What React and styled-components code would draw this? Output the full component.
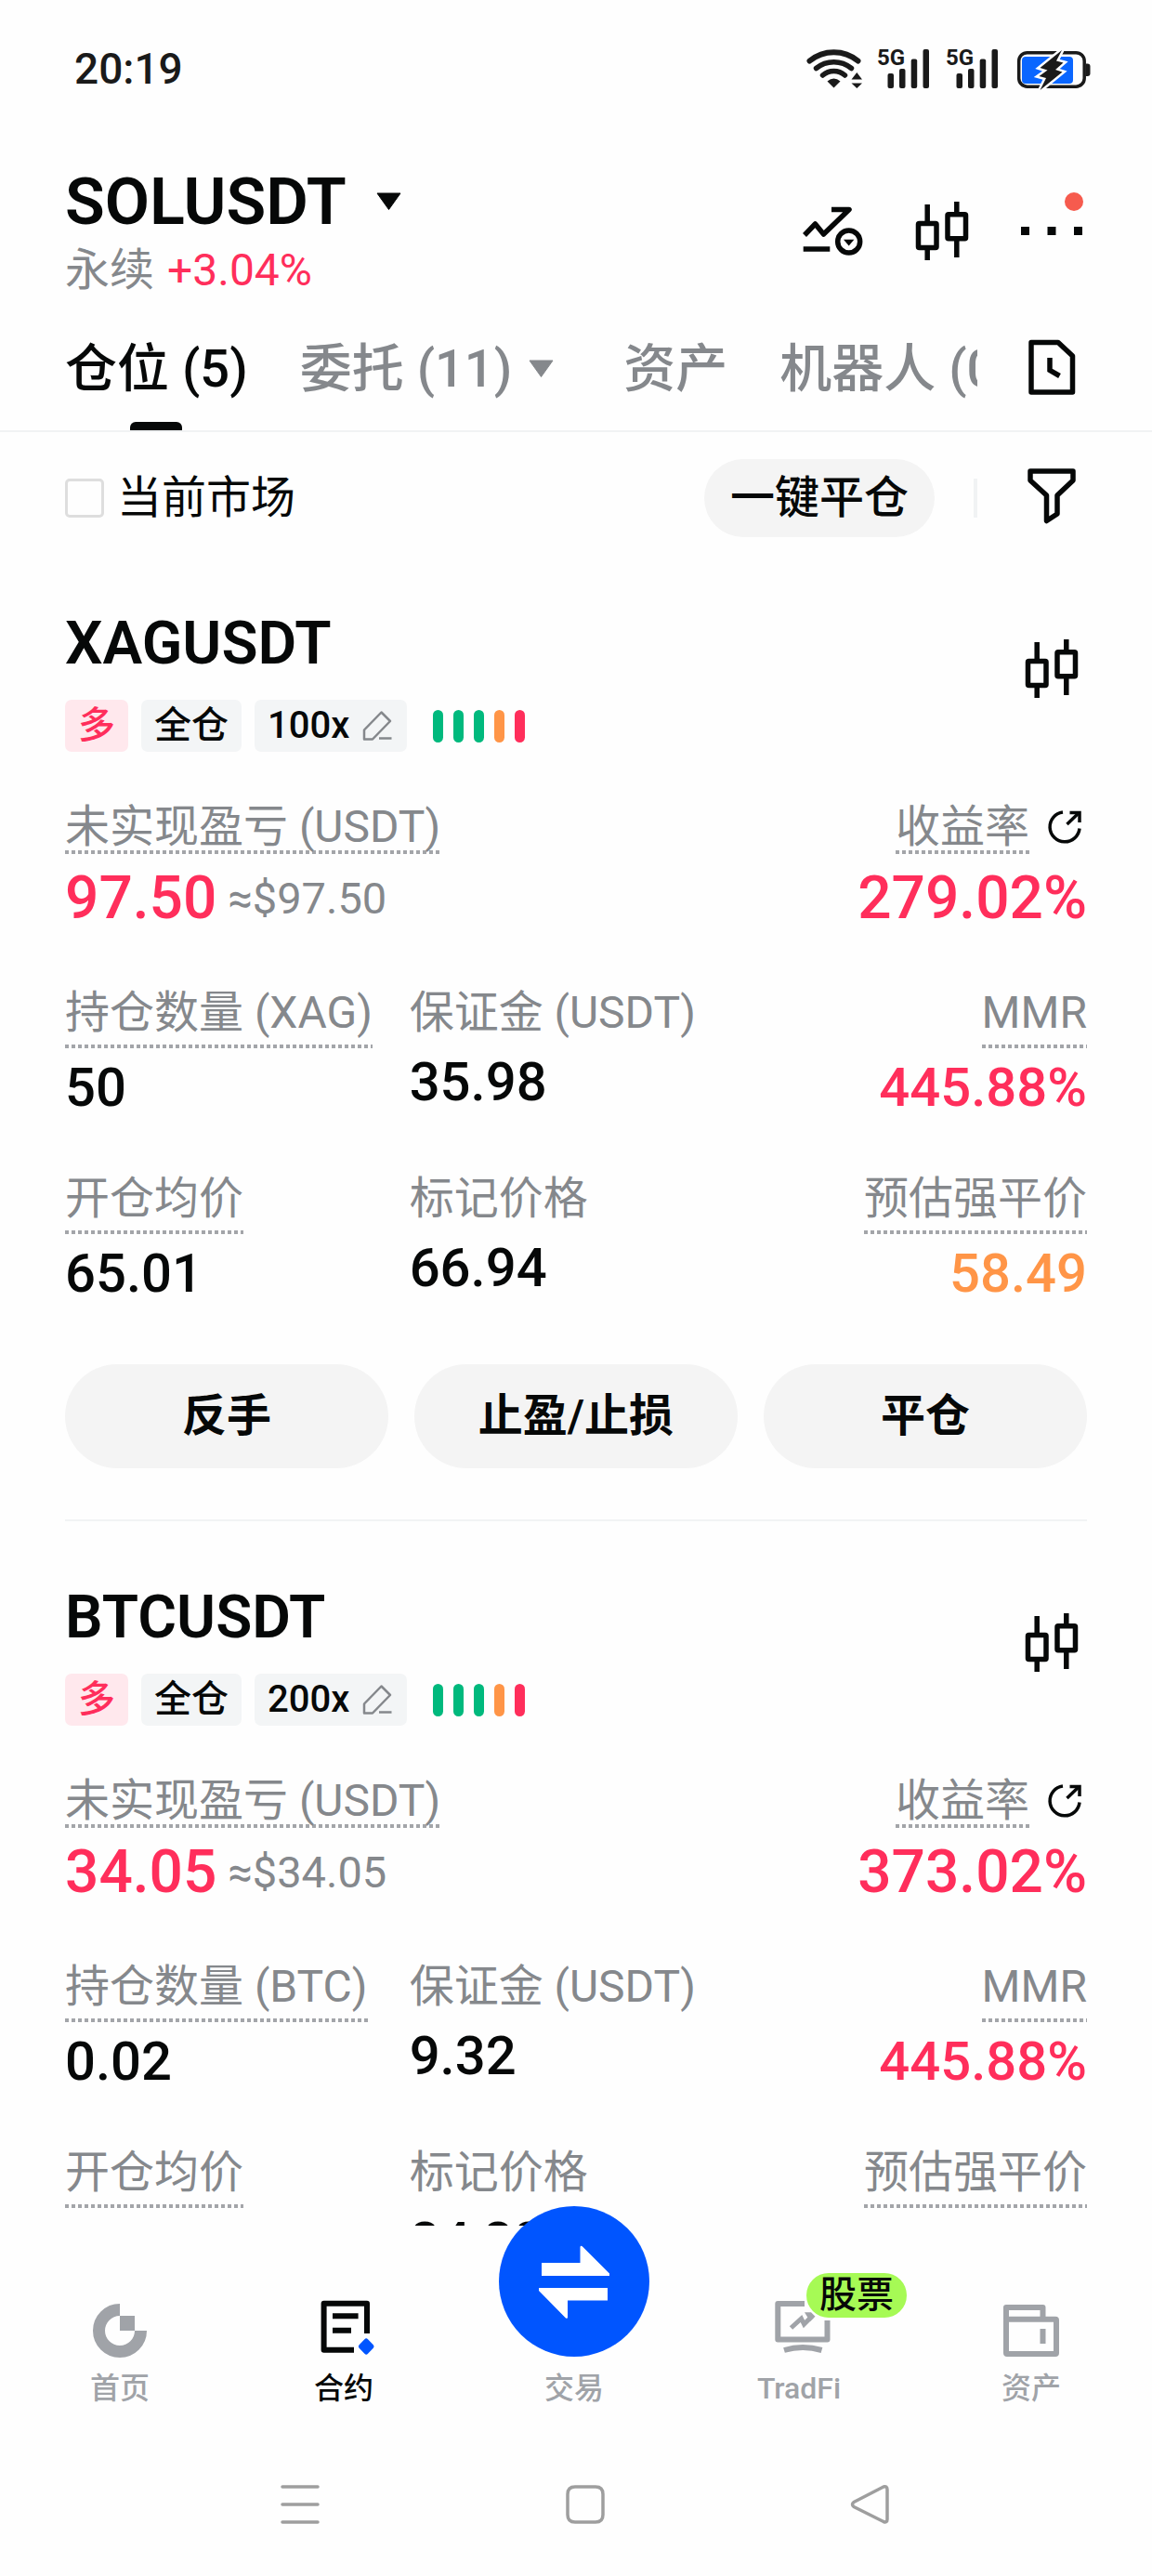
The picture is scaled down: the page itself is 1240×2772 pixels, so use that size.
import React, { useState } from 'react';
import styled, { createGlobalStyle } from 'styled-components';

const colors = {
  text: '#060808',
  grey: '#85888c',
  navGrey: '#a0a3a8',
  pink: '#ff2e5b',
  orange: '#ff9547',
  green: '#00b97d',
  blue: '#0055ff',
  line: '#f1f3f4',
  fill: '#f4f4f4',
  page: '#fefefe',
};

const GlobalStyle = createGlobalStyle`
  * {
    box-sizing: border-box;
  }

  body {
    margin: 0;
    background: ${colors.page};
    color: ${colors.text};
    font-family: Roboto, 'Noto Sans CJK SC', sans-serif;
  }

  h1, h2, dl, dd, dt {
    margin: 0;
  }

  button {
    padding: 0;
    border: 0;
    background: none;
    color: inherit;
    font: inherit;
    cursor: pointer;
  }

  svg {
    display: block;
    flex: none;
    overflow: visible;
  }
`;

const Page = styled.div`
  display: flex;
  flex-direction: column;
  height: 100vh;
  overflow: hidden;
`;

/* ---------- status bar ---------- */

const StatusBar = styled.div`
  display: flex;
  align-items: center;
  justify-content: space-between;
  padding: 47px 66px 0 80px;
  color: #1a1a1a;
  font-size: 46px;
  font-weight: 500;
  line-height: 54px;
`;

const StatusIcons = styled.div`
  display: flex;
  align-items: center;
  gap: 18px;
`;

const SignalBox = styled.span`
  position: relative;
`;

const SignalLabel = styled.span`
  position: absolute;
  top: 0;
  left: -2px;
  font-size: 24px;
  font-weight: 700;
  line-height: 24px;
`;

const WifiIcon = () => (
  <svg width="60" height="48" viewBox="0 0 60 48" fill="none" stroke="#1a1a1a" strokeWidth="6" strokeLinecap="round">
    <path d="M3.500 15.500A41 41 0 0 1 55.500 15.500" />
    <path d="M10.500 23.500A30 30 0 0 1 48.500 23.500" strokeWidth="5.500" />
    <path d="M17.500 31A18 18 0 0 1 41.500 31" strokeWidth="5.500" />
    <path d="M22.500 37.500Q29.500 31.500 36.500 37.500L29.500 44.500Z" fill="#1a1a1a" stroke="none" />
    <path d="M48.500 35.500L54.300 28L60 35.500ZM48.500 39.500L54.300 45L60 39.500Z" fill="#1a1a1a" stroke="none" />
  </svg>
);

const SignalIcon = () => (
  <SignalBox>
    <svg width="56" height="48" viewBox="0 0 56 48" fill="#1a1a1a">
      <rect x="9.500" y="29" width="6.500" height="16" rx="2" />
      <rect x="22" y="24" width="6.500" height="21" rx="2" />
      <rect x="34.700" y="13.500" width="6.500" height="31.500" rx="2" />
      <rect x="47.500" y="3" width="6.500" height="42" rx="2" />
    </svg>
    <SignalLabel>5G</SignalLabel>
  </SignalBox>
);

const BatteryIcon = () => (
  <svg width="80" height="48" viewBox="0 0 80 48" fill="none">
    <rect x="2.700" y="6.700" width="70.500" height="36.500" rx="9" stroke="#1a1a1a" strokeWidth="3.500" />
    <rect x="6" y="11" width="55" height="29" rx="4" fill="#0a66ff" />
    <path d="M75 18.500h1.500a3 3 0 0 1 3 3v7.500a3 3 0 0 1-3 3H75Z" fill="#1a1a1a" />
    <path
      d="M49 4L25.500 23L33.500 25.500L24.500 32L32 34L25.500 47L49.500 27.500L42 25L50.500 17.500L43 15.500Z"
      fill="#1a1a1a"
      stroke="#fff"
      strokeWidth="5"
      paintOrder="stroke"
    />
  </svg>
);

/* ---------- header ---------- */

const Header = styled.header`
  display: flex;
  justify-content: space-between;
  padding: 76px 70px 0;
`;

const PairButton = styled.button`
  display: flex;
  align-items: center;
  gap: 32px;
`;

const PairName = styled.h1`
  font-size: 70px;
  font-weight: 600;
  line-height: 80px;
`;

const PairMeta = styled.div`
  display: flex;
  gap: 14px;
  margin-top: 6px;
  color: ${colors.grey};
  font-size: 48px;
  line-height: 56px;
`;

const Change = styled.span`
  color: ${colors.pink};
`;

const HeaderActions = styled.div`
  display: flex;
  align-items: flex-start;
  gap: 42px;
  padding-top: 33px;
`;

const CaretIcon = ({ color, width = 27, inset = 0 }) => (
  <svg width={width} height="20" viewBox={`${-inset} 0 ${width} 20`}>
    <path d="M1 1H26L13.500 18.500Z" fill={color} stroke={color} strokeWidth="1" strokeLinejoin="round" />
  </svg>
);

const TrendIcon = () => (
  <svg width="76" height="76" viewBox="0 0 76 76" fill="none" stroke={colors.text} strokeWidth="5.500">
    <path d="M8 43L19.500 31L28.500 42L56 15.500H37" strokeLinejoin="round" />
    <path d="M6.700 58H35.300" />
    <circle cx="55.700" cy="50" r="12" />
    <path d="M50 47.700H61.400L55.700 54.500Z" fill={colors.text} stroke="none" />
  </svg>
);

const CandlesIcon = () => (
  <svg width="76" height="76" viewBox="0 0 76 76" fill="none" stroke={colors.text} strokeWidth="5.500">
    <rect x="12.500" y="30.500" width="19.500" height="26" rx="1" />
    <path d="M22.200 10V30M22.200 57V70" />
    <rect x="44" y="20.700" width="19.500" height="26" rx="1" />
    <path d="M53.800 7V20M53.800 47V67" />
  </svg>
);

const MoreIcon = () => (
  <svg width="76" height="76" viewBox="0 0 76 76" fill={colors.text}>
    <rect x="5" y="34" width="9" height="9" />
    <rect x="33.500" y="34" width="9" height="9" />
    <rect x="62" y="34" width="9" height="9" />
    <circle cx="62" cy="7" r="10" fill="#f65b4e" />
  </svg>
);

/* ---------- tabs ---------- */

const TabBar = styled.nav`
  display: flex;
  align-items: flex-start;
  gap: 42px;
  padding: 38px 70px 0;
  border-bottom: 2px solid ${colors.line};
`;

const TabStrip = styled.div`
  display: flex;
  flex: 1;
  gap: 56px;
  min-width: 0;
  overflow: hidden;
`;

const Tab = styled.button`
  position: relative;
  display: flex;
  flex: none;
  align-items: center;
  padding-bottom: 26px;
  color: ${({ $active }) => ($active ? colors.text : colors.grey)};
  font-size: 56px;
  font-weight: 500;
  line-height: 80px;
  white-space: nowrap;

  &::after {
    content: '';
    display: ${({ $active }) => ($active ? 'block' : 'none')};
    position: absolute;
    bottom: 0;
    left: calc(50% - 28px);
    width: 56px;
    height: 9px;
    border-radius: 6px 6px 0 0;
    background: ${colors.text};
  }
`;

const HistoryIcon = () => (
  <svg width="76" height="76" viewBox="0 0 76 76" fill="none" stroke={colors.text} strokeWidth="5.500">
    <path d="M16 11.500H45L60.500 26V65H16Z" strokeLinejoin="round" />
    <path d="M36 28V41.500L46.500 47.500" />
  </svg>
);

/* ---------- filter row ---------- */

const FilterRow = styled.div`
  display: flex;
  align-items: center;
  padding: 29px 70px 11px;
  font-size: 48px;
  line-height: 54px;
`;

const MarketToggle = styled.label`
  display: flex;
  flex: 1;
  align-items: center;
  gap: 14px;
`;

const Checkbox = styled.input`
  width: 42px;
  height: 42px;
  margin: 0;
  border: 3px solid #dedede;
  border-radius: 5px;
  appearance: none;

  &:checked {
    border-color: ${colors.text};
    background: ${colors.text};
  }
`;

const CloseAll = styled.button`
  height: 84px;
  padding: 0 28px;
  border-radius: 42px;
  background: ${colors.fill};
  font-weight: 500;
`;

const Separator = styled.span`
  width: 4px;
  height: 42px;
  margin: 0 42px;
  background: ${colors.line};
`;

const FunnelIcon = () => (
  <svg width="76" height="76" viewBox="0 0 76 76" fill="none" stroke={colors.text} strokeWidth="5.500">
    <path d="M15 9H61V19L44 35V55L32.500 62.500V35L15 19Z" strokeLinejoin="round" />
  </svg>
);

/* ---------- position card ---------- */

const List = styled.main`
  flex: 1;
  min-height: 0;
  overflow: hidden;
`;

const Card = styled.article`
  margin: 0 70px;
  padding: 66px 0 55px;
  border-bottom: 2px solid ${colors.line};
`;

const CardHead = styled.div`
  display: flex;
  align-items: flex-start;
  justify-content: space-between;
`;

const ChartButton = styled.button`
  margin-top: 26px;
`;

const Symbol = styled.h2`
  font-size: 64px;
  font-weight: 600;
  line-height: 76px;
`;

const Tags = styled.div`
  display: flex;
  align-items: center;
  gap: 14px;
  margin-top: 22px;
`;

const Tag = styled.span`
  display: flex;
  align-items: center;
  gap: 14px;
  height: 56px;
  padding: 0 14px;
  border-radius: 7px;
  background: ${({ $side }) => ($side ? '#ffe8ed' : '#f3f5f6')};
  color: ${({ $side }) => ($side ? colors.pink : colors.text)};
  font-size: 40px;
  font-weight: 500;
  line-height: 56px;
`;

const RiskBars = styled.div`
  display: flex;
  gap: 11px;
  margin-left: 14px;
`;

const RiskBar = styled.span`
  width: 11px;
  height: 35px;
  border-radius: 6px;
  background: ${({ $color }) => $color};
`;

const EditIcon = () => (
  <svg width="34" height="36" viewBox="0 0 34 36" fill="none" stroke={colors.grey} strokeWidth="2.500">
    <path d="M2 32.500V22.500L20.500 3.500L30 13L11 32.500Z" strokeLinejoin="round" />
    <path d="M18 31.500H31.500" />
  </svg>
);

const ShareIcon = () => (
  <svg width="48" height="56" viewBox="0 -4 48 56" fill="none" stroke={colors.text} strokeWidth="3.500">
    <path d="M22 9A16 16 0 1 0 40 26.500" />
    <path d="M26.500 22L39.500 9.500" />
    <path d="M29.500 9.500H40V20" />
  </svg>
);

const Summary = styled.dl`
  display: flex;
  justify-content: space-between;
  margin-top: 52px;
`;

const Metrics = styled.dl`
  display: grid;
  grid-template-columns: repeat(3, 1fr);
  gap: 56px 12px;
  margin-top: 56px;
`;

const Metric = styled.div`
  display: flex;
  flex-direction: column;
  align-items: ${({ $right }) => ($right ? 'flex-end' : 'flex-start')};
`;

const LabelRow = styled.dt`
  display: flex;
  align-items: flex-start;
  gap: 14px;
  color: ${colors.grey};
  font-size: 48px;
  line-height: 58px;
  white-space: nowrap;
`;

const Hint = styled.span`
  padding-bottom: ${({ $tight }) => ($tight ? 0 : 9)}px;
  background: repeating-linear-gradient(90deg, #a3a5a9 0 4px, transparent 4px 7px) bottom left / 100% 4px no-repeat;
`;

const BigValue = styled.dd`
  display: flex;
  align-items: center;
  gap: 12px;
  margin-top: 10px;
  color: ${colors.pink};
  font-size: 64px;
  font-weight: 500;
  line-height: 76px;
`;

const Approx = styled.span`
  color: ${colors.grey};
  font-size: 47px;
  font-weight: 400;
`;

const Value = styled.dd`
  margin-top: ${({ $plain }) => ($plain ? 10 : 7)}px;
  color: ${({ $color }) => $color || colors.text};
  font-size: 58px;
  font-weight: 500;
  line-height: 70px;
`;

const Actions = styled.div`
  display: grid;
  grid-template-columns: repeat(3, 1fr);
  gap: 28px;
  margin-top: 63px;
`;

const ActionButton = styled.button`
  height: 112px;
  border-radius: 56px;
  background: ${colors.fill};
  font-size: 48px;
  font-weight: 600;
  line-height: 56px;
`;

const risk = [colors.green, colors.green, colors.green, colors.orange, colors.pink];

const positions = [
  {
    symbol: 'XAGUSDT',
    leverage: '100x',
    pnl: '97.50',
    roi: '279.02%',
    metrics: [
      { label: '持仓数量 (XAG)', value: '50', hint: true },
      { label: '保证金 (USDT)', value: '35.98' },
      { label: 'MMR', value: '445.88%', hint: true, right: true, color: colors.pink },
      { label: '开仓均价', value: '65.01', hint: true },
      { label: '标记价格', value: '66.94' },
      { label: '预估强平价', value: '58.49', hint: true, right: true, color: colors.orange },
    ],
    actions: ['反手', '止盈/止损', '平仓'],
  },
  {
    symbol: 'BTCUSDT',
    leverage: '200x',
    pnl: '34.05',
    roi: '373.02%',
    metrics: [
      { label: '持仓数量 (BTC)', value: '0.02', hint: true },
      { label: '保证金 (USDT)', value: '9.32' },
      { label: 'MMR', value: '445.88%', hint: true, right: true, color: colors.pink },
      { label: '开仓均价', hint: true },
      { label: '标记价格', value: '84,88' },
      { label: '预估强平价', hint: true, right: true },
    ],
    actions: [],
  },
];

const PositionCard = ({ position }) => (
  <Card>
    <CardHead>
      <div>
        <Symbol>{position.symbol}</Symbol>
        <Tags>
          <Tag $side>多</Tag>
          <Tag>全仓</Tag>
          <Tag as="button">
            {position.leverage}
            <EditIcon />
          </Tag>
          <RiskBars>
            {risk.map((color, i) => (
              <RiskBar key={i} $color={color} />
            ))}
          </RiskBars>
        </Tags>
      </div>
      <ChartButton aria-label="K线">
        <CandlesIcon />
      </ChartButton>
    </CardHead>

    <Summary>
      <Metric>
        <LabelRow>
          <Hint $tight>未实现盈亏 (USDT)</Hint>
        </LabelRow>
        <BigValue>
          {position.pnl}
          <Approx>≈${position.pnl}</Approx>
        </BigValue>
      </Metric>
      <Metric $right>
        <LabelRow>
          <Hint $tight>收益率</Hint>
          <button aria-label="分享">
            <ShareIcon />
          </button>
        </LabelRow>
        <BigValue>{position.roi}</BigValue>
      </Metric>
    </Summary>

    <Metrics>
      {position.metrics.map((m) => (
        <Metric key={m.label} $right={m.right}>
          <LabelRow>{m.hint ? <Hint>{m.label}</Hint> : m.label}</LabelRow>
          {m.value && (
            <Value $plain={!m.hint} $color={m.color}>
              {m.value}
            </Value>
          )}
        </Metric>
      ))}
    </Metrics>

    {position.actions.length > 0 && (
      <Actions>
        {position.actions.map((action) => (
          <ActionButton key={action}>{action}</ActionButton>
        ))}
      </Actions>
    )}
  </Card>
);

/* ---------- bottom navigation ---------- */

const BottomNav = styled.nav`
  position: relative;
  z-index: 1;
  display: grid;
  grid-template-columns: 230fr 252fr 244fr 240fr 260fr;
  padding: 79px 0 0 14px;
  background: ${colors.page};
`;

const NavItem = styled.a`
  position: relative;
  display: flex;
  flex-direction: column;
  align-items: center;
  gap: 12px;
  color: ${({ $active }) => ($active ? colors.text : colors.navGrey)};
  font-size: 32px;
  font-weight: 500;
  line-height: 40px;
  text-decoration: none;
`;

const TradeCircle = styled.span`
  position: absolute;
  top: -100px;
  left: calc(50% - 81px);
  width: 162px;
  height: 162px;
  border-radius: 50%;
  background: ${colors.blue};
`;

const IconSpace = styled.span`
  height: 64px;
`;

const NavBadge = styled.span`
  position: absolute;
  top: -28px;
  left: calc(50% + 8px);
  padding: 0 14px;
  border-radius: 24px;
  background: #a6fa55;
  color: ${colors.text};
  font-size: 40px;
  font-weight: 500;
  line-height: 48px;
  white-space: nowrap;
`;

const HomeIcon = () => (
  <svg width="64" height="64" viewBox="0 0 64 64" fill="none">
    <path d="M32 11.500A22.500 22.500 0 1 0 54.500 34" stroke={colors.navGrey} strokeWidth="13" />
    <rect x="32" y="18" width="16" height="16" fill={colors.navGrey} />
  </svg>
);

const FuturesIcon = () => (
  <svg width="64" height="64" viewBox="0 0 64 64" fill="none" stroke={colors.text} strokeWidth="6">
    <path d="M57 37V4.700H10.600V54.700H43" strokeLinejoin="round" />
    <path d="M20 18.300H47.600M20 33.700H40" />
    <path
      d="M56.200 45L62 51L56.200 57L50.400 51Z"
      fill={colors.blue}
      stroke={colors.blue}
      strokeWidth="5"
      strokeLinejoin="round"
    />
  </svg>
);

const TradeIcon = () => (
  <svg width="162" height="162" viewBox="0 0 162 162" fill="#fff">
    <path d="M46 61H87.500V44Q88 42 90 43.500L119 72.500V75H46Z" />
    <path d="M117 88H43V91L72 120.500Q74 121.500 74 119.500V101.500H117Z" />
  </svg>
);

const TradFiIcon = () => (
  <svg width="64" height="64" viewBox="0 0 64 64" fill="none" stroke={colors.navGrey} strokeWidth="6">
    <path d="M38 5H9.300V43.500H62.500V23" strokeLinejoin="round" />
    <path d="M16 55Q36 49 56.500 55" />
    <path d="M23.500 31L34.500 21L37.500 27L46 18.500" strokeWidth="5" />
    <path d="M38 14.300H45L49.500 18.700L44 24Z" fill={colors.navGrey} stroke="none" />
  </svg>
);

const WalletIcon = () => (
  <svg width="64" height="64" viewBox="0 0 64 64" fill="none" stroke={colors.navGrey} strokeWidth="6">
    <path d="M5 22V9H44.500V21" strokeLinejoin="round" />
    <rect x="5" y="21.700" width="54" height="37.300" rx="1" />
    <path d="M44.500 32V48" />
  </svg>
);

const SystemNav = styled.div`
  display: grid;
  grid-template-columns: repeat(3, 1fr);
  justify-items: center;
  padding: 83px 149px 55px 169px;
  background: ${colors.page};
`;

const SystemIcon = ({ d }) => (
  <svg width="44" height="44" viewBox="0 0 44 44" fill="none" stroke="#9e9e9e" strokeWidth="3.500" strokeLinecap="round">
    <path d={d} strokeLinejoin="round" />
  </svg>
);

const tabs = ['仓位 (5)', '委托 (11)', '资产', '机器人 (0)'];

export default function App() {
  const [active, setActive] = useState(0);

  return (
    <Page>
      <GlobalStyle />
      <StatusBar>
        <span>20:19</span>
        <StatusIcons>
          <WifiIcon />
          <SignalIcon />
          <SignalIcon />
          <BatteryIcon />
        </StatusIcons>
      </StatusBar>

      <Header>
        <div>
          <PairButton>
            <PairName>SOLUSDT</PairName>
            <CaretIcon color={colors.text} />
          </PairButton>
          <PairMeta>
            <span>永续</span>
            <Change>+3.04%</Change>
          </PairMeta>
        </div>
        <HeaderActions>
          <button aria-label="指标">
            <TrendIcon />
          </button>
          <button aria-label="K线">
            <CandlesIcon />
          </button>
          <button aria-label="更多">
            <MoreIcon />
          </button>
        </HeaderActions>
      </Header>

      <TabBar>
        <TabStrip>
          {tabs.map((name, i) => (
            <Tab key={name} $active={i === active} onClick={() => setActive(i)}>
              {name}
              {i === 1 && <CaretIcon color={colors.grey} width={64} inset={18} />}
            </Tab>
          ))}
        </TabStrip>
        <button aria-label="历史记录">
          <HistoryIcon />
        </button>
      </TabBar>

      <List>
        <FilterRow>
          <MarketToggle>
            <Checkbox type="checkbox" />
            当前市场
          </MarketToggle>
          <CloseAll>一键平仓</CloseAll>
          <Separator />
          <button aria-label="筛选">
            <FunnelIcon />
          </button>
        </FilterRow>
        {positions.map((p) => (
          <PositionCard key={p.symbol} position={p} />
        ))}
      </List>

      <BottomNav>
        <NavItem href="#home">
          <HomeIcon />
          首页
        </NavItem>
        <NavItem href="#futures" $active>
          <FuturesIcon />
          合约
        </NavItem>
        <NavItem href="#trade">
          <TradeCircle>
            <TradeIcon />
          </TradeCircle>
          <IconSpace />
          交易
        </NavItem>
        <NavItem href="#tradfi">
          <TradFiIcon />
          TradFi
          <NavBadge>股票</NavBadge>
        </NavItem>
        <NavItem href="#assets">
          <WalletIcon />
          资产
        </NavItem>
      </BottomNav>

      <SystemNav>
        <button aria-label="菜单">
          <SystemIcon d="M3 3H41M3 22H41M3 41H41" />
        </button>
        <button aria-label="主屏幕">
          <SystemIcon d="M11 3H33Q41 3 41 11V33Q41 41 33 41H11Q3 41 3 33V11Q3 3 11 3Z" />
        </button>
        <button aria-label="返回">
          <SystemIcon d="M36 3Q40 2 40 6V38Q40 42 36 40.500L4 24.500Q1 22 4 19.500Z" />
        </button>
      </SystemNav>
    </Page>
  );
}
